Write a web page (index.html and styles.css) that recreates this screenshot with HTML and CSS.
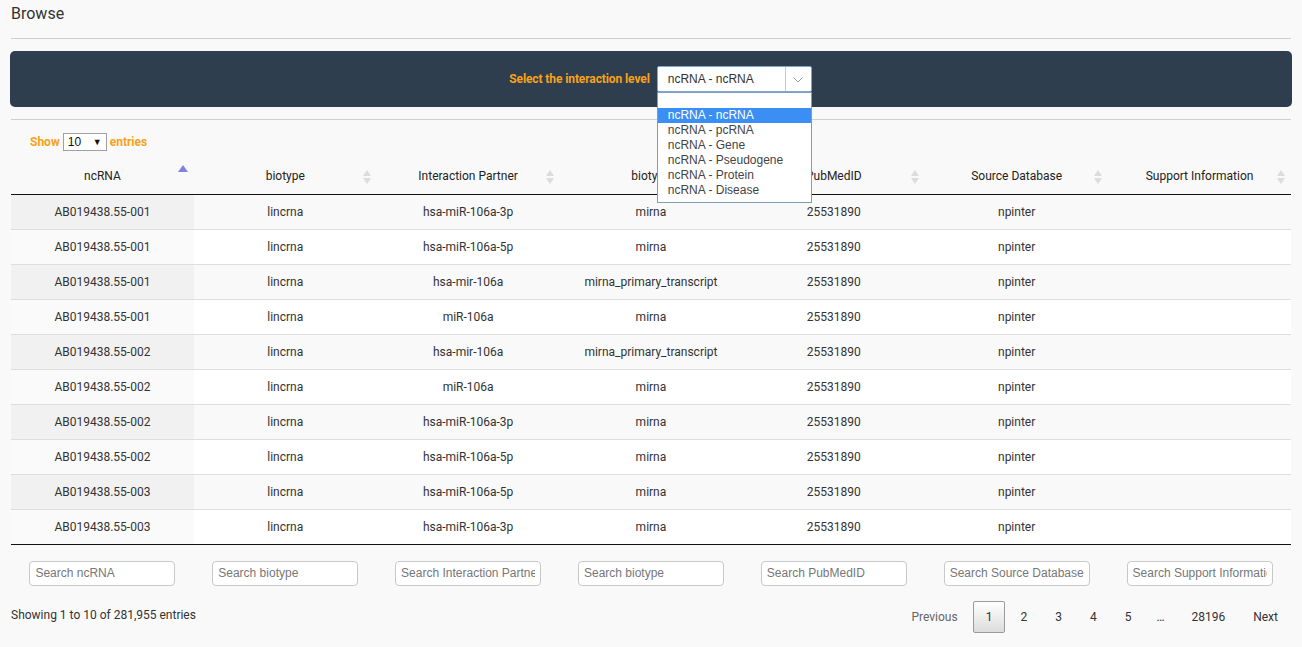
FILE: index.html
```html
<!DOCTYPE html>
<html>
<head>
<meta charset="utf-8">
<link rel="stylesheet" href="styles.css">
</head>
<body>
<div class="page">
  <h1 class="title">Browse</h1>
  <div class="rule rule-top"></div>
  <div class="panel">
    <div class="level">
      <span class="level-label">Select the interaction level</span>
      <div class="combo">
        <div class="combo-box">
          <span class="combo-text">ncRNA - ncRNA</span>
          <span class="combo-arrow"><svg width="10" height="6" viewBox="0 0 10 6"><path d="M0.5 0.5 L5 5 L9.5 0.5" fill="none" stroke="#9a9a9a" stroke-width="1"/></svg></span>
        </div>
        <ul class="combo-list">
          <li class="opt">&nbsp;</li>
          <li class="opt opt-active">ncRNA - ncRNA</li>
          <li class="opt">ncRNA - pcRNA</li>
          <li class="opt">ncRNA - Gene</li>
          <li class="opt">ncRNA - Pseudogene</li>
          <li class="opt">ncRNA - Protein</li>
          <li class="opt">ncRNA - Disease</li>
        </ul>
      </div>
    </div>
  </div>
  <div class="rule rule-mid"></div>
  <div class="length">
    <span>Show</span>
    <span class="len-select"><span>10</span><span class="len-caret">▼</span></span>
    <span>entries</span>
  </div>
  <table class="grid">
    <thead>
      <tr>
        <th class="sort-asc">ncRNA<span class="sorter"><span class="up"></span></span></th>
        <th>biotype<span class="sorter"><span class="up"></span><span class="down"></span></span></th>
        <th>Interaction Partner<span class="sorter"><span class="up"></span><span class="down"></span></span></th>
        <th>biotype<span class="sorter"><span class="up"></span><span class="down"></span></span></th>
        <th>PubMedID<span class="sorter"><span class="up"></span><span class="down"></span></span></th>
        <th>Source Database<span class="sorter"><span class="up"></span><span class="down"></span></span></th>
        <th>Support Information<span class="sorter"><span class="up"></span><span class="down"></span></span></th>
      </tr>
    </thead>
    <tbody>
      <tr><td class="s">AB019438.55-001</td><td>lincrna</td><td>hsa-miR-106a-3p</td><td>mirna</td><td>25531890</td><td>npinter</td><td></td></tr>
      <tr><td class="s">AB019438.55-001</td><td>lincrna</td><td>hsa-miR-106a-5p</td><td>mirna</td><td>25531890</td><td>npinter</td><td></td></tr>
      <tr><td class="s">AB019438.55-001</td><td>lincrna</td><td>hsa-mir-106a</td><td>mirna_primary_transcript</td><td>25531890</td><td>npinter</td><td></td></tr>
      <tr><td class="s">AB019438.55-001</td><td>lincrna</td><td>miR-106a</td><td>mirna</td><td>25531890</td><td>npinter</td><td></td></tr>
      <tr><td class="s">AB019438.55-002</td><td>lincrna</td><td>hsa-mir-106a</td><td>mirna_primary_transcript</td><td>25531890</td><td>npinter</td><td></td></tr>
      <tr><td class="s">AB019438.55-002</td><td>lincrna</td><td>miR-106a</td><td>mirna</td><td>25531890</td><td>npinter</td><td></td></tr>
      <tr><td class="s">AB019438.55-002</td><td>lincrna</td><td>hsa-miR-106a-3p</td><td>mirna</td><td>25531890</td><td>npinter</td><td></td></tr>
      <tr><td class="s">AB019438.55-002</td><td>lincrna</td><td>hsa-miR-106a-5p</td><td>mirna</td><td>25531890</td><td>npinter</td><td></td></tr>
      <tr><td class="s">AB019438.55-003</td><td>lincrna</td><td>hsa-miR-106a-5p</td><td>mirna</td><td>25531890</td><td>npinter</td><td></td></tr>
      <tr><td class="s">AB019438.55-003</td><td>lincrna</td><td>hsa-miR-106a-3p</td><td>mirna</td><td>25531890</td><td>npinter</td><td></td></tr>
    </tbody>
    <tfoot>
      <tr>
        <td><input class="search" placeholder="Search ncRNA"></td>
        <td><input class="search" placeholder="Search biotype"></td>
        <td><input class="search" placeholder="Search Interaction Partner"></td>
        <td><input class="search" placeholder="Search biotype"></td>
        <td><input class="search" placeholder="Search PubMedID"></td>
        <td><input class="search" placeholder="Search Source Database"></td>
        <td><input class="search" placeholder="Search Support Information"></td>
      </tr>
    </tfoot>
  </table>
  <div class="footer">
    <div class="info">Showing 1 to 10 of 281,955 entries</div>
    <div class="pager">
      <span class="pbtn disabled">Previous</span>
      <span class="pbtn current">1</span>
      <span class="pbtn">2</span>
      <span class="pbtn">3</span>
      <span class="pbtn">4</span>
      <span class="pbtn">5</span>
      <span class="ellipsis">…</span>
      <span class="pbtn">28196</span>
      <span class="pbtn">Next</span>
    </div>
  </div>
</div>
</body>
</html>
```

FILE: styles.css
```css
* { box-sizing: border-box; }
html, body { margin: 0; padding: 0; }
body {
  background: #f9f9f9;
  font-family: Roboto, "Liberation Sans", Arial, sans-serif;
  font-size: 12px;
  color: #333;
}
.page { padding: 0 10px 0 10px; width: 1302px; }
.title {
  margin: 0;
  padding: 5px 0 0 1px;
  font-size: 16px;
  font-weight: 400;
  line-height: 18px;
  color: #333;
}
.rule { height: 1px; background: #cfcfcf; margin-left: 1px; width: 1280px; }
.rule-top { margin-top: 15px; }
.panel {
  margin-top: 12px;
  height: 56px;
  width: 1282px;
  background: #2f3e4e;
  border-radius: 5px;
  display: flex;
  align-items: center;
  justify-content: center;
  padding-left: 19px;
}
.rule-mid { margin-top: 12px; }
.level { display: flex; align-items: center; gap: 7px; }
.level-label { color: #f7a21a; font-weight: 700; font-size: 12px; letter-spacing: -0.1px; }
.combo { position: relative; width: 155px; }
.combo-box {
  height: 26px;
  border: 1px solid #7fa7d6;
  border-radius: 2px;
  background: #fff;
  display: flex;
  align-items: stretch;
  font-family: "Liberation Sans", Arial, sans-serif;
  font-size: 12px;
}
.combo-text { flex: 1; padding-left: 10px; line-height: 24px; color: #333; }
.combo-arrow {
  width: 26px;
  border-left: 1px solid #c8c8c8;
  display: flex;
  align-items: center;
  justify-content: center;
  padding-top: 2px;
}
.combo-list {
  position: absolute;
  left: 0;
  top: 26px;
  width: 155px;
  margin: 0;
  padding: 0 0 4px 0;
  list-style: none;
  background: #fff;
  border: 1px solid #7f9db9;
  font-family: "Liberation Sans", Arial, sans-serif;
  font-size: 12px;
  z-index: 5;
}
.opt { height: 15px; line-height: 15px; padding-left: 10px; color: #444; }
.opt-active { background: #3b8ef3; color: #fff; }

.length {
  margin-top: 12px;
  padding-left: 20px;
  height: 20px;
  display: flex;
  align-items: center;
  gap: 3px;
  color: #f7a21a;
  font-weight: 700;
  font-size: 12px;
}
.len-select {
  display: inline-flex;
  align-items: center;
  justify-content: space-between;
  width: 44px;
  height: 18px;
  border: 1px solid #a0a0a0;
  background: #fff;
  padding: 0 4px;
  color: #111;
  font-weight: 400;
  font-family: "Liberation Sans", Arial, sans-serif;
  font-size: 12px;
}
.len-caret { font-size: 9px; color: #111; }

.grid {
  margin-top: 8px;
  margin-left: 1px;
  width: 1280px;
  table-layout: fixed;
  border-collapse: collapse;
}
.grid th {
  position: relative;
  height: 34px;
  padding: 0 10px 2px 10px;
  font-weight: 400;
  font-size: 12px;
  color: #222;
  text-align: center;
  border-bottom: 1px solid #111;
}
.sorter {
  position: absolute;
  right: 6px;
  top: 50%;
  transform: translateY(-50%);
  display: flex;
  flex-direction: column;
  gap: 2px;
}
.sorter .up {
  width: 0; height: 0;
  border-left: 4px solid transparent;
  border-right: 4px solid transparent;
  border-bottom: 6px solid #dcdcdc;
}
.sorter .down {
  width: 0; height: 0;
  border-left: 4px solid transparent;
  border-right: 4px solid transparent;
  border-top: 6px solid #dcdcdc;
}
.sort-asc .sorter { transform: translateY(-12px); }
.sort-asc .sorter .up { border-bottom-color: #8282df; border-left-width: 5px; border-right-width: 5px; border-bottom-width: 7px; }
.grid tbody td {
  height: 35px;
  padding: 0 8px;
  text-align: center;
  border-bottom: 1px solid #dedede;
  color: #333;
  white-space: nowrap;
  overflow: hidden;
}
.grid tbody tr:nth-child(odd) td { background: #f9f9f9; }
.grid tbody tr:nth-child(even) td { background: #fff; }
.grid tbody tr:nth-child(odd) td.s { background: #f1f1f1; }
.grid tbody tr:nth-child(even) td.s { background: #fafafa; }
.grid tbody tr:last-child td { border-bottom: 1px solid #111; }
.grid tfoot td { padding-top: 16px; text-align: center; }
.search {
  width: 146px;
  height: 25px;
  border: 1px solid #c8c8c8;
  border-radius: 4px;
  background: #fff;
  padding: 0 5px;
  font-family: "Liberation Sans", Arial, sans-serif;
  font-size: 12px;
  color: #333;
}
.search::placeholder { color: #777; }

.footer {
  margin-top: 14px;
  width: 1281px;
  display: flex;
  justify-content: space-between;
  align-items: center;
  height: 32px;
}
.info { padding-left: 1px; padding-bottom: 4px; color: #333; }
.pager { display: flex; align-items: center; }
.pbtn {
  margin-left: 2px;
  padding: 0 12px;
  height: 32px;
  line-height: 30px;
  border: 1px solid transparent;
  border-radius: 2px;
  color: #333;
  min-width: 18px;
  text-align: center;
}
.pbtn.disabled { color: #666; }
.pbtn.current {
  border-color: #9a9a9a;
  background: linear-gradient(to bottom, #fff 0%, #dcdcdc 100%);
}
.ellipsis { padding: 0 12px 0 10px; margin-left: 2px; color: #333; line-height: 32px; }
```
